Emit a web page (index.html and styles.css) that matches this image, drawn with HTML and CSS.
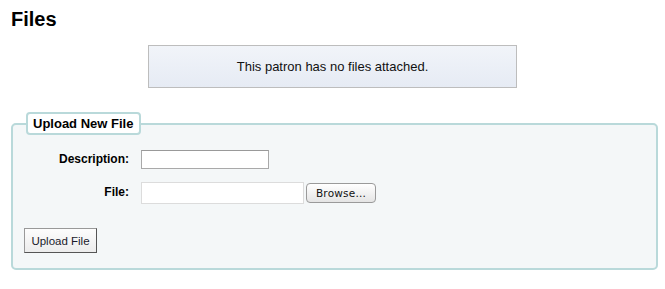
FILE: index.html
```html
<!DOCTYPE html>
<html lang="en">
<head>
    <meta charset="UTF-8">
    <title>Files</title>
    <link rel="stylesheet" href="styles.css">
</head>
<body>
    <h1>Files</h1>

    <div class="dialog message">This patron has no files attached.</div>

    <form class="upload-form">
        <fieldset class="rows">
            <legend>Upload New File</legend>
            <ol>
                <li class="row row-desc">
                    <label for="description">Description:</label>
                    <input type="text" id="description" class="text-input">
                </li>
                <li class="row row-file">
                    <label for="uploadfile">File:</label>
                    <div class="file-picker">
                        <input type="text" id="uploadfile" class="file-input" readonly>
                        <button type="button" class="browse-btn">Browse...</button>
                    </div>
                </li>
            </ol>
            <div class="action">
                <button type="submit" class="submit-btn">Upload File</button>
            </div>
        </fieldset>
    </form>
</body>
</html>
```

FILE: styles.css
```css
html, body {
    margin: 0;
    padding: 0;
    background-color: #fff;
    color: #000;
    font-family: "Liberation Sans", Arial, sans-serif;
}

h1 {
    margin: 7px 0 0 11px;
    font-size: 20px;
    line-height: 24px;
    font-weight: bold;
}

.dialog {
    box-sizing: border-box;
    width: 369px;
    height: 43px;
    margin: 14px auto 0;
    padding: 13px 0;
    border: 1px solid #bdbdbd;
    background: linear-gradient(to bottom, #f1f4f9 0%, #e6ebf4 100%);
    font-size: 13px;
    line-height: 15px;
    text-align: center;
    color: #111;
}

.upload-form {
    margin: 24px 7px 0 11px;
}

fieldset.rows {
    margin: 0;
    padding: 0 11px 15px 11px;
    border: 2px solid #b9d9da;
    border-radius: 5px;
    background-color: #f4f7f8;
}

fieldset.rows legend {
    margin-left: 2px;
    padding: 2px 6px 2px 5px;
    border: 2px solid #b9d9da;
    border-radius: 4px;
    background-color: #fff;
    font-size: 13px;
    line-height: 15px;
    font-weight: bold;
}

fieldset.rows ol {
    list-style: none;
    margin: 15px 0 0 0;
    padding: 0;
    display: flex;
    flex-direction: column;
    gap: 13px;
}

.row {
    display: grid;
    grid-template-columns: 105px auto;
    column-gap: 12px;
    align-items: center;
}

.row label {
    text-align: right;
    font-size: 12px;
    font-weight: bold;
    line-height: 14px;
    margin-top: -2px;
}

.text-input {
    box-sizing: border-box;
    width: 128px;
    height: 19px;
    margin: 0;
    padding: 1px 3px;
    border: 1px solid #a9a9a9;
    border-top-color: #999;
    background-color: #fff;
    font-size: 12px;
}

.file-picker {
    display: flex;
    align-items: center;
    gap: 2px;
}

.file-input {
    box-sizing: border-box;
    width: 163px;
    height: 22px;
    margin: 0;
    padding: 1px 3px;
    border: 1px solid #dcdcdc;
    background-color: #fff;
    font-size: 12px;
}

.browse-btn {
    box-sizing: border-box;
    width: 70px;
    height: 20px;
    margin: 0;
    padding: 0;
    border: 1px solid #9a9a9a;
    border-radius: 4px;
    background: linear-gradient(to bottom, #ffffff 0%, #f2f2f2 50%, #e4e4e4 100%);
    font-family: "DejaVu Sans", sans-serif;
    font-size: 10.5px;
    letter-spacing: 0.2px;
    color: #111;
}

.action {
    margin-top: 24px;
}

.submit-btn {
    box-sizing: border-box;
    width: 73px;
    height: 25px;
    margin: 0;
    padding: 0;
    border: 1px solid #999;
    border-right-color: #555;
    border-bottom-color: #555;
    background: linear-gradient(to bottom, #fdfdfd 0%, #ececec 100%);
    font-family: "Liberation Sans", Arial, sans-serif;
    font-size: 11.5px;
    color: #1a1a2a;
}
```
